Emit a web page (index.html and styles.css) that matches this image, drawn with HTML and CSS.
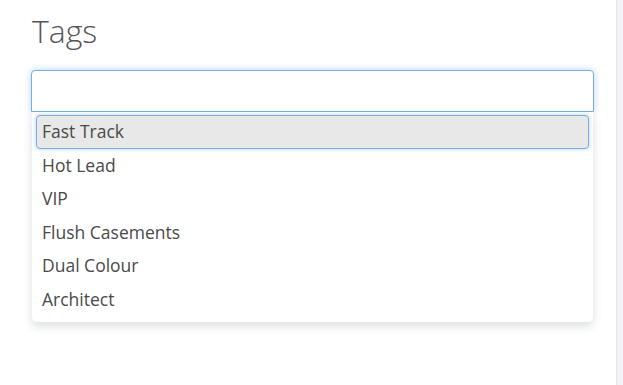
FILE: index.html
```html
<!DOCTYPE html>
<html lang="en">
<head>
    <meta charset="UTF-8">
    <meta name="viewport" content="width=device-width, initial-scale=1.0">
    <title>Tags</title>
    <link rel="stylesheet" href="styles.css">
</head>
<body>
    <div class="page">
        <h1 class="title">Tags</h1>

        <div class="tag-picker">
            <input type="text" class="tag-input" />
            <ul class="tag-menu">
                <li class="tag-option active">Fast Track</li>
                <li class="tag-option">Hot Lead</li>
                <li class="tag-option">VIP</li>
                <li class="tag-option">Flush Casements</li>
                <li class="tag-option">Dual Colour</li>
                <li class="tag-option">Architect</li>
            </ul>
        </div>
    </div>

    <div class="sidebar"></div>
</body>
</html>
```

FILE: styles.css
```css
html, body {
    height: 100%;
}

body {
    margin: 0;
    padding: 0;
    font-family: "Open Sans", Arial, sans-serif;
    background-color: #fff;
    color: #444;
    display: flex;
    overflow: hidden;
}

.page {
    flex: 1;
    padding: 13px 22px 0 31px;
}

.sidebar {
    width: 6px;
    background: #f3f3f7;
    border-left: 1px solid #e6e7ee;
}

.title {
    margin: 0 0 22px 1px;
    font-size: 32px;
    font-weight: 300;
    line-height: 35px;
    color: #555;
}

.tag-picker {
    width: 563px;
}

.tag-input {
    display: block;
    box-sizing: border-box;
    width: 100%;
    height: 42px;
    margin: 0;
    padding: 6px 10px;
    font-family: inherit;
    font-size: 16px;
    border: 1px solid #7aaee0;
    border-radius: 4px 4px 0 0;
    box-shadow: 0 0 7px rgba(102, 160, 225, 0.45);
    outline: none;
}

.tag-menu {
    list-style: none;
    margin: 0 1px;
    padding: 3px 4px 5px;
    background: #fff;
    border-radius: 0 0 5px 5px;
    box-shadow: 0 4px 10px rgba(60, 70, 100, 0.18);
}

.tag-option {
    padding: 3px 5px;
    border: 1px solid transparent;
    border-radius: 4px;
    font-size: 17.5px;
    line-height: 25.6px;
    color: #4a4a4a;
}

.tag-option.active {
    background: #e8e8e8;
    border-color: #7aaee0;
    box-shadow: 0 0 4px rgba(102, 160, 225, 0.5);
}
```
